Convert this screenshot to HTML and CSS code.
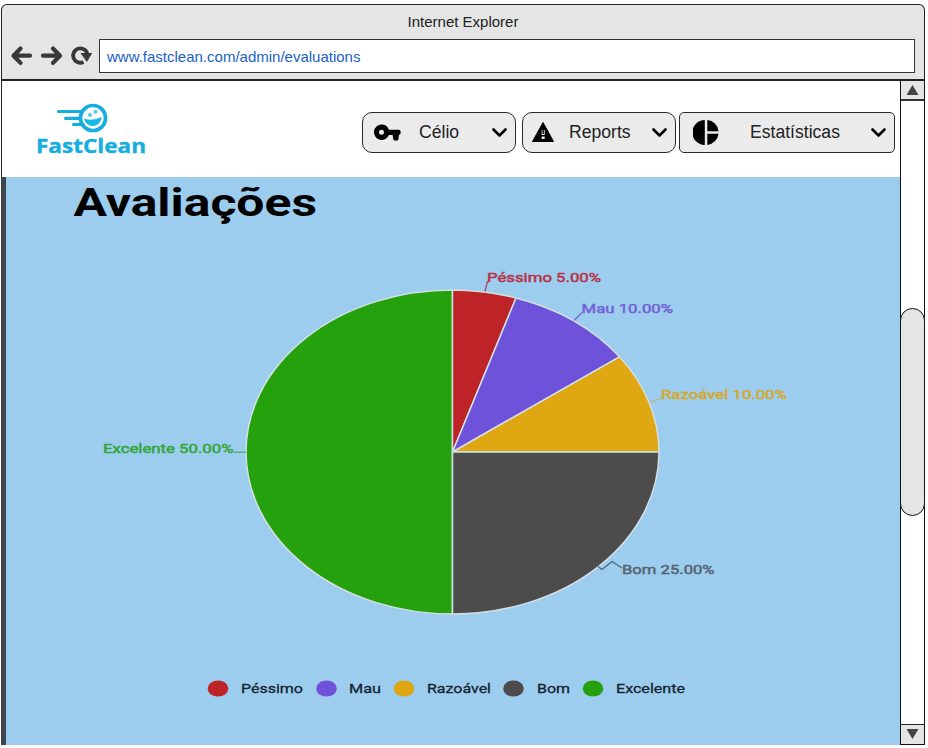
FILE: index.html
```html
<!DOCTYPE html>
<html lang="pt">
<head>
<meta charset="utf-8">
<title>FastClean</title>
<link rel="stylesheet" href="styles.css">
</head>
<body>
<div class="window">
  <header class="chrome">
    <div class="window-title">Internet Explorer</div>
    <div class="toolbar">
      <svg class="nav-icons" width="88" height="34" viewBox="0 0 88 34" fill="none" stroke="#383838" stroke-width="4.200" stroke-linecap="round" stroke-linejoin="round">
        <path d="M28 16.700H12M18.500 9.500 11.500 16.700l7 7.200M41 16.700h16M51 9.500 58 16.700l-7 7.200"/>
        <path stroke-linecap="butt" stroke-width="3.800" d="M81.500 23A7.200 7.200 0 1 1 85.500 16"/>
        <path d="M79.500 14.500h10L85 22z" fill="#383838" stroke-width="1"/>
      </svg>
      <div class="address">www.fastclean.com/admin/evaluations</div>
    </div>
  </header>
  <div class="body">
    <main class="page">
      <nav class="topbar">
        <svg class="logo" width="118" height="64" viewBox="0 0 118 64">
          <g fill="none" stroke="#16addf" stroke-linecap="round">
            <circle cx="57" cy="18" r="12.500" stroke-width="3.700"/>
            <path stroke-width="3.200" d="M22.500 11.500H46M29.500 18.300h15M37.500 24.500h10"/>
          </g>
          <path fill="#16b9ea" d="M48 18.500q8.500 3 17.500-1.500a8.800 8.800 0 0 1-17.500 1.500z"/>
          <circle cx="54" cy="15" r="2" fill="#58c8ec"/><circle cx="59.500" cy="11.700" r="2" fill="#58c8ec"/>
          <text class="logo-text" x="0" y="53" textLength="110" lengthAdjust="spacingAndGlyphs">FastClean</text>
        </svg>
        <div class="menus">
          <div class="menu">
            <svg class="icon" width="30" height="26" viewBox="0 0 30 26"><path fill-rule="evenodd" d="M9.500 4.500a7.800 7.800 0 0 1 7.400 5.200H27q1.600 0 1.600 1.600v2q0 1.400-1.600 1.400l-.6 4.500q-.2 1.200-1.300 1.200h-2.500q-1.100 0-1.300-1.200l-.7-4.300h-3.700A7.700 7.700 0 1 1 9.500 4.500zm0 5.200a2.500 2.500 0 1 0 0 5 2.500 2.500 0 0 0 0-5z"/></svg>
            <span class="celio">Célio</span>
            <svg class="chevron" width="15" height="10" viewBox="0 0 15 10"><path d="M1.500 1.500l6 6 6-6"/></svg>
          </div>
          <div class="menu">
            <svg class="icon" width="26" height="26" viewBox="0 0 26 26"><path d="M13 2.500 23.500 21.500H2.500z" stroke="#000" stroke-linejoin="round"/><path d="M11.700 10h3v5h-3zM11.700 16.500h3V19h-3z" fill="#ebebeb"/><path d="M12.500 10h1.400v4h-1.400z"/></svg>
            <span class="reports">Reports</span>
            <svg class="chevron" width="15" height="10" viewBox="0 0 15 10"><path d="M1.500 1.500l6 6 6-6"/></svg>
          </div>
          <div class="menu wide">
            <svg class="icon" width="26" height="26" viewBox="0 0 26 26"><path d="M11.800 0v25A12.500 12.500 0 0 1 11.800 0zM14.300 0A12.500 12.500 0 0 1 25.500 11.200H14.300zM14.300 13.700h11.200a12.500 12.500 0 0 1-11.200 11.200z"/></svg>
            <span class="stats">Estatísticas</span>
            <svg class="chevron" width="15" height="10" viewBox="0 0 15 10"><path d="M1.500 1.500l6 6 6-6"/></svg>
          </div>
        </div>
      </nav>
      <section class="report">
        <svg class="chart" width="894" height="568" viewBox="6 177 894 568">
          <text class="heading" x="73.500" y="215.500" textLength="243.500" lengthAdjust="spacingAndGlyphs">Avaliações</text>
          <g stroke="#d3dfe4" stroke-width="1.500" stroke-linejoin="round">
            <path fill="#25a10d" d="M452.500 452V614A206.500 162 0 0 1 452.500 290z"/>
            <path fill="#be2427" d="M452.500 452V290A206.500 162 0 0 1 516 298z"/>
            <path fill="#6e53da" d="M452.500 452 516 298A206.500 162 0 0 1 619.500 356.800z"/>
            <path fill="#dfa711" d="M452.500 452 619.500 356.800A206.500 162 0 0 1 659 452z"/>
            <path fill="#4c4c4d" d="M452.500 452H659A206.500 162 0 0 1 452.500 614z"/>
          </g>
          <g fill="none" stroke-width="1.200">
            <path stroke="#a8445c" d="M485 291.500 487.500 281"/>
            <path stroke="#6e66d5" d="M574 320.500 582 312.500"/>
            <path stroke="#c4ae62" d="M650 402 661 398.500"/>
            <path stroke="#4a6577" d="M598 566.500 602 569.500 612 561.500 622 568"/>
            <path stroke="#3eac66" d="M234 452.200H246"/>
          </g>
          <g class="label">
            <text x="487" y="282" fill="#b93147" stroke="#b93147" textLength="114" lengthAdjust="spacingAndGlyphs">Péssimo 5.00%</text>
            <text x="581.500" y="312.500" fill="#7360d8" stroke="#7360d8" textLength="91.500" lengthAdjust="spacingAndGlyphs">Mau 10.00%</text>
            <text x="661" y="398.500" fill="#d6a92b" stroke="#d6a92b" textLength="126" lengthAdjust="spacingAndGlyphs">Razoável 10.00%</text>
            <text x="622" y="573.500" fill="#566571" stroke="#566571" textLength="92.500" lengthAdjust="spacingAndGlyphs">Bom 25.00%</text>
            <text x="103" y="452.500" fill="#32a639" stroke="#32a639" textLength="130.500" lengthAdjust="spacingAndGlyphs">Excelente 50.00%</text>
          </g>
          <g>
            <ellipse cx="218" cy="688.500" rx="10.300" ry="8.100" fill="#be2427"/>
            <ellipse cx="326.500" cy="688.500" rx="10.300" ry="8.100" fill="#6e53da"/>
            <ellipse cx="404" cy="688.500" rx="10.300" ry="8.100" fill="#dfa711"/>
            <ellipse cx="513.500" cy="688.500" rx="10.300" ry="8.100" fill="#4c4c4d"/>
            <ellipse cx="593" cy="688.500" rx="10.300" ry="8.100" fill="#25a10d"/>
          </g>
          <g class="legend">
            <text x="241" y="692.500" textLength="62" lengthAdjust="spacingAndGlyphs">Péssimo</text>
            <text x="349" y="692.500" textLength="32" lengthAdjust="spacingAndGlyphs">Mau</text>
            <text x="427" y="692.500" textLength="64" lengthAdjust="spacingAndGlyphs">Razoável</text>
            <text x="537" y="692.500" textLength="33" lengthAdjust="spacingAndGlyphs">Bom</text>
            <text x="616" y="692.500" textLength="69" lengthAdjust="spacingAndGlyphs">Excelente</text>
          </g>
        </svg>
      </section>
    </main>
    <aside class="scrollbar">
      <div class="arrow up"><svg width="14" height="12"><path d="M6.500 1 12.500 11H.5z" fill="#444"/></svg></div>
      <div class="track"><div class="thumb"></div></div>
      <div class="arrow down"><svg width="14" height="12"><path d="M6.500 10 12.500 0H.5z" fill="#444"/></svg></div>
    </aside>
  </div>
</div>
</body>
</html>
```

FILE: styles.css
```css
* { box-sizing: border-box; }

body {
  margin: 0;
  padding: 4px 0 0 1px;
  background: #fff;
  font-family: "Liberation Sans", Arial, sans-serif;
  color: #222;
  overflow: hidden;
}

.window { width: 924px; height: 742px; }

.chrome {
  height: 77px;
  background: #e5e5e5;
  border: 1px solid #222;
  border-bottom: 2px solid #222;
  border-radius: 6px 6px 0 0;
}

.window-title {
  height: 30px;
  padding-top: 8px;
  font-size: 15px;
  line-height: 18px;
  text-align: center;
}

.toolbar { display: flex; padding: 4px 9px 0 0; }
.nav-icons { flex: none; margin-right: 9px; overflow: visible; }

.address {
  flex: 1;
  height: 34px;
  padding-left: 7px;
  border: 1px solid #333;
  background: #fff;
  color: #1b61c5;
  font-size: 15px;
  line-height: 33px;
}

.body { display: flex; height: 665px; }

.page {
  width: 899px;
  display: flex;
  flex-direction: column;
}

.topbar {
  display: flex;
  justify-content: space-between;
  align-items: flex-start;
  height: 96px;
  padding: 19px 5px 0 34px;
  border-left: 1px solid #222;
}

.logo { overflow: visible; }

.logo-text {
  font-family: "Open Sans", sans-serif;
  font-weight: 700;
  font-size: 20px;
  fill: #16addf;
  stroke: #16addf;
  stroke-width: 0.4px;
}

.menus { display: flex; padding-top: 12px; }

.menu {
  display: flex;
  align-items: center;
  width: 154px;
  height: 41px;
  margin-right: 6px;
  padding: 0 8px 0 9px;
  background: #ebebeb;
  border: 1px solid #2a2a2a;
  border-radius: 10px;
  font-size: 17.6px;
}

.menu:nth-child(2) { margin-right: 3px; padding-left: 7px; }
.menu.wide { width: 216px; margin-right: 0; padding-left: 13px; border-radius: 5px; }
.celio { margin-left: 17px; }
.reports { margin-left: 13px; }
.stats { margin-left: 31px; }

.chevron {
  margin-left: auto;
  fill: none;
  stroke: #000;
  stroke-width: 2.6;
  stroke-linecap: round;
  stroke-linejoin: round;
}

.report {
  height: 568px;
  border-left: 5px solid #40474c;
  background: #9ccdee;
}

.chart {
  display: block;
  font-family: Roboto, sans-serif;
}

.heading { font-weight: 700; font-size: 39.5px; fill: #000; }
.label { font-weight: 400; font-size: 13.5px; stroke-width: 0.5px; }

.legend {
  font-weight: 400;
  font-size: 13.5px;
  fill: #14232e;
  stroke: #14232e;
  stroke-width: 0.3px;
}

.scrollbar {
  display: flex;
  flex-direction: column;
  width: 25px;
  height: 664px;
  border: 1px solid #111;
  border-top: 0;
}

.arrow {
  display: flex;
  align-items: center;
  justify-content: center;
  height: 20px;
  background: #e5e5e5;
}

.arrow.up { border-bottom: 2px solid #333; }
.arrow.down { border-top: 1px solid #222; }

.track { flex: 1; padding-top: 207px; }

.thumb {
  height: 208px;
  margin: 0 -1px;
  background: #e5e5e5;
  border: 1px solid #111;
  border-radius: 12.5px;
}
```
